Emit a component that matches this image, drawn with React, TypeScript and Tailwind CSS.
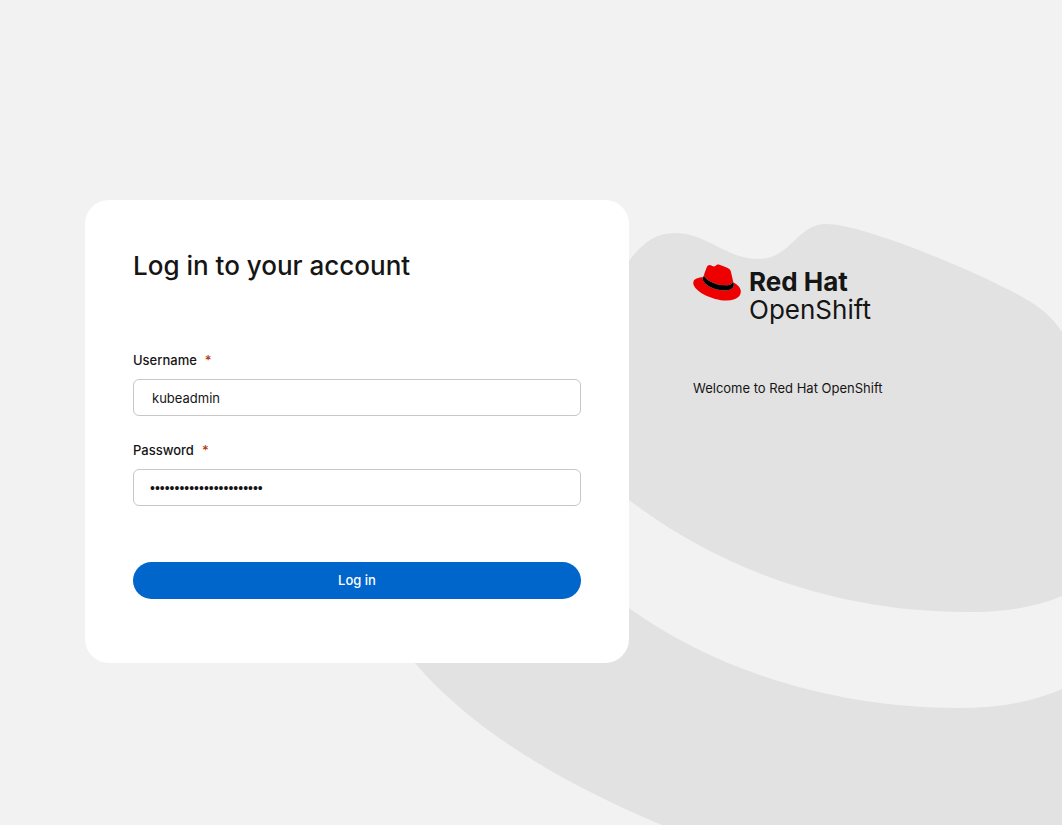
import { useState } from "react";
import type { FormEvent, InputHTMLAttributes } from "react";

function BackgroundShapes() {
  return (
    <svg
      className="absolute inset-0 h-full w-full"
      viewBox="0 0 1062 825"
      preserveAspectRatio="xMaxYMax slice"
      fill="#e2e2e2"
      aria-hidden="true"
    >
      <path d="M600 330C612 290 617 277 629 261C642 243 656 233 675 233C707 233 726 259 758 259C791 259 797 224 826 224C850 224 905 243 967 270C1022 295 1046 307 1062 332V596C1034 608 1003 612 966 612C840 612 722 571 629 500L600 475Z" />
      <path d="M400 643L415 663C473 732 570 787 662 825H1062V689C1030 703 996 708 958 708C835 708 716 671 629 608L600 585Z" />
    </svg>
  );
}

function HatIcon() {
  return (
    <svg className="w-12 shrink-0" viewBox="0 0 192 146" aria-hidden="true">
      <path
        fill="#e00"
        d="M129 85c12.51 0 30.61-2.58 30.61-17.46a14 14 0 0 0-.31-3.42l-7.45-32.36c-1.72-7.12-3.23-10.35-15.73-16.6C126.39 10.19 105.26 2 99 2c-5.83 0-7.54 7.54-14.45 7.54-6.68 0-11.64-5.6-17.89-5.6-6 0-9.91 4.09-12.93 12.5 0 0-8.41 23.72-9.49 27.16a6.43 6.43 0 0 0-.22 1.94C44 54.76 80.33 85 129 85m32.55-11.38c1.73 8.19 1.73 9.05 1.73 10.13 0 14-15.74 21.77-36.43 21.77C80.08 105.55 39.17 78.14 39.17 60a18.45 18.45 0 0 1 1.51-7.33C23.86 53.52 1 56.54 1 75.76c0 31.48 74.59 70.28 133.65 70.28 45.28 0 56.7-20.48 56.7-36.65 0-12.72-11-27.16-30.83-35.78"
      />
      <path
        fill="#000"
        d="M161.52 73.62c1.73 8.19 1.73 9.05 1.73 10.13 0 14-15.74 21.77-36.43 21.77C80.08 105.54 39.12 78.13 39.12 60a18.45 18.45 0 0 1 1.51-7.33l3.66-9.06a6.43 6.43 0 0 0-.29 2c0 9.24 36.33 39.45 85 39.45 12.51 0 30.61-2.58 30.61-17.46a14 14 0 0 0-.31-3.42z"
      />
    </svg>
  );
}

interface FieldProps extends InputHTMLAttributes<HTMLInputElement> {
  id: string;
  label: string;
}

function Field({ id, label, type, ...inputProps }: FieldProps) {
  return (
    <div className="flex flex-col gap-2">
      <label htmlFor={id} className="text-[13px] leading-[21px] font-medium">
        {label}
        <span className="ml-2 text-[#b1380b]" aria-hidden="true">
          *
        </span>
      </label>
      <input
        id={id}
        type={type}
        required
        className={`h-[37px] w-full rounded-md border border-[#c7c7c7] bg-white focus:outline-2 focus:outline-[#0066cc] ${
          type === "password" ? "px-4 font-['Liberation_Sans',sans-serif] text-sm" : "px-[18px] text-[13px]"
        }`}
        {...inputProps}
      />
    </div>
  );
}

export default function App() {
  const [username, setUsername] = useState("kubeadmin");
  const [password, setPassword] = useState("aBcDe-FgHiJ-kLmNo-PqRsT");

  const handleSubmit = (e: FormEvent) => {
    e.preventDefault();
  };

  return (
    <div className="relative min-h-screen overflow-hidden bg-[#f2f2f2] font-[Inter,sans-serif] text-[#151515]">
      <BackgroundShapes />

      <div className="relative mx-auto grid max-w-[892px] pt-[200px] pb-16 md:grid-cols-[544px_1fr]">
        <main className="rounded-3xl bg-white px-12 pt-12 pb-16">
          <h1 className="text-[26px] leading-9 font-medium">Log in to your account</h1>

          <form onSubmit={handleSubmit} className="mt-[66px] flex flex-col gap-6">
            <Field
              id="username"
              label="Username"
              type="text"
              autoComplete="off"
              value={username}
              onChange={(e) => setUsername(e.target.value)}
            />
            <Field
              id="password"
              label="Password"
              type="password"
              autoComplete="off"
              value={password}
              onChange={(e) => setPassword(e.target.value)}
            />
            <button
              type="submit"
              className="mt-8 h-[37px] w-full cursor-pointer rounded-full bg-[#0066cc] text-[13px] font-medium text-white hover:bg-[#004d99]"
            >
              Log in
            </button>
          </form>
        </main>

        <aside className="px-16 pt-16">
          <div className="flex items-start gap-2">
            <HatIcon />
            <div className="pt-1 text-[26px] leading-7">
              <div className="font-bold">Red Hat</div>
              <div>OpenShift</div>
            </div>
          </div>
          <p className="mt-[54px] text-[13px] leading-[21px] whitespace-nowrap">Welcome to Red Hat OpenShift</p>
        </aside>
      </div>
    </div>
  );
}
